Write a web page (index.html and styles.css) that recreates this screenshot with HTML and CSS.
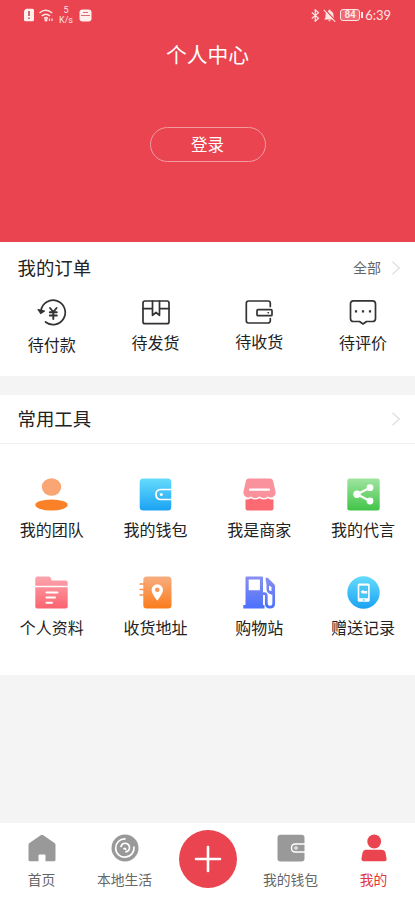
FILE: index.html
```html
<!DOCTYPE html>
<html lang="zh-CN">
<head>
<meta charset="utf-8">
<meta name="viewport" content="width=device-width">
<title>个人中心</title>
<link rel="stylesheet" href="styles.css">
</head>
<body>
<svg class="defs" width="0" height="0">
  <defs>
    <linearGradient id="orange" x1="0" y1="0" x2="0" y2="1"><stop offset="0" stop-color="#f8ae80"/><stop offset="1" stop-color="#fa7b1c"/></linearGradient>
    <linearGradient id="blue" x1="0" y1="0" x2="0" y2="1"><stop offset="0" stop-color="#65dbfc"/><stop offset="1" stop-color="#1ba2f3"/></linearGradient>
    <linearGradient id="pink" x1="0" y1="0" x2="0" y2="1"><stop offset="0" stop-color="#fba5ae"/><stop offset="1" stop-color="#fb636e"/></linearGradient>
    <linearGradient id="green" x1="0" y1="0" x2="0" y2="1"><stop offset="0" stop-color="#9fe5a0"/><stop offset="1" stop-color="#41c447"/></linearGradient>
    <linearGradient id="indigo" x1="0" y1="0" x2="0" y2="33" gradientUnits="userSpaceOnUse"><stop offset="0" stop-color="#8990ee"/><stop offset="1" stop-color="#4a70fd"/></linearGradient>
  </defs>
</svg>
<div class="app">
  <header class="hero">
    <div class="status">
      <div class="status-left">
        <svg width="12" height="14" viewBox="0 0 12 14"><path d="M3 .7h6.500a1.500 1.500 0 0 1 1.500 1.500v9.600a1.500 1.500 0 0 1-1.500 1.500h-7A1.500 1.500 0 0 1 1 11.800V2.700z" fill="#fff0ee"/><path d="M6 3v5M6 9.500v1.500" stroke="#b9424b" stroke-width="1.500"/></svg>
        <svg class="wifi" width="15" height="13" viewBox="0 0 15 13" fill="none" stroke="#ffe5e3" stroke-width="1.500"><path d="M.5 4q6.200-5.400 12.800 0M2.700 7q4.200-3.500 8.400 0M5 9.500q2-1.700 4 0"/><circle cx="7" cy="11" r=".8"/><path d="M10.500 9.500v2.500M13 9.500v2.500" stroke-width="1.200"/></svg>
        <div class="speed"><span>5</span><span>K/s</span></div>
        <svg width="13" height="13" viewBox="0 0 13 13"><rect x=".5" y=".5" width="12" height="12" rx="3" fill="#fff0ee"/><path d="M2 6.500h9M4 3.500h5" stroke="#df6c71" stroke-width="1.200"/></svg>
      </div>
      <div class="status-right">
        <svg width="9" height="13" viewBox="0 0 9 13" fill="none" stroke="#ffe5e3" stroke-width="1.200"><path d="M.8 3.500l6.700 5.700-3.300 3V.8l3.300 3L.8 9.500"/></svg>
        <svg class="bell" width="13" height="13" viewBox="0 0 13 13"><path d="M1 10.500c1.300-1 1.500-2 1.500-4.300 0-2.400 1-3.700 3-4.200V.8h2V2c2 .5 3 2 3 4.200s.2 3.300 1.500 4.300zM5 11.200h3l-1.500 1.300z" fill="#ffe5e3"/><path d="M2 .5l11 12" stroke="#e9444f" stroke-width="1.500"/><path d="M.8 .8l11.500 12" stroke="#ffe5e3" stroke-width="1.100"/></svg>
        <div class="battery">84</div>
        <span class="clock">6:39</span>
      </div>
    </div>
    <h1>个人中心</h1>
    <button class="login">登录</button>
  </header>

  <section class="orders">
    <div class="bar"><h2>我的订单</h2><span class="all">全部</span>
      <svg class="chev" width="10" height="14" viewBox="0 0 10 14"><path d="M1.500.8l6.800 6.200-6.800 6.200"/></svg></div>
    <div class="grid">
      <a class="item pay"><svg width="30" height="30" viewBox="0 0 30 30" class="line"><path d="M4 12.500A12.200 12.200 0 1 1 8.500 24"/><path d="M1 11.500l2.700 4L7.500 13z" fill="#333" stroke-width="1.200"/><path d="M13 10l3.300 4 3.300-4M16.300 14v7M12.800 14.300h7M12.800 17.500h7" stroke-width="1.900"/></svg><span>待付款</span></a>
      <a class="item ship"><svg width="30" height="30" viewBox="0 0 30 30" class="line"><rect x="2" y="3" width="26" height="22.700" rx="2"/><path d="M2 10.700h9M19 10.700h9M11.500 3v14.300l3.500-2.800 3.500 2.800V3"/></svg><span>待发货</span></a>
      <a class="item recv"><svg width="30" height="30" viewBox="0 0 30 30" class="line"><path d="M26.300 8.500V5.200a2.200 2.200 0 0 0-2.200-2.200H4.500A2.200 2.200 0 0 0 2.300 5.200v17.600A2.200 2.200 0 0 0 4.500 25h19.600a2.200 2.200 0 0 0 2.200-2.200V20.500"/><rect x="13" y="11.700" width="15" height="6" rx="1"/><path d="M24 14.700h.5" stroke-width="1.400"/></svg><span>待收货</span></a>
      <a class="item rate"><svg width="30" height="30" viewBox="0 0 30 30" class="line"><path d="M5.500 2.800h19a3 3 0 0 1 3 3v15a3 3 0 0 1-3 2.700h-6L15 26l-3.500-2.500h-6a3 3 0 0 1-3-2.700v-15a3 3 0 0 1 3-3z"/><path d="M6.900 13.300h2.200M13.900 13.300h2.200M20.900 13.300h2.200" stroke-width="2.300" stroke-linecap="butt"/></svg><span>待评价</span></a>
    </div>
  </section>

  <section class="tools">
    <div class="bar"><h2>常用工具</h2>
      <svg class="chev" width="10" height="14" viewBox="0 0 10 14"><path d="M1.500.8l6.800 6.200-6.800 6.200"/></svg></div>
    <div class="grid">
      <a class="item"><svg width="33" height="33" viewBox="0 0 33 33"><ellipse cx="16.500" cy="9" rx="9.700" ry="8.800" fill="#f9a574"/><ellipse cx="16.500" cy="27" rx="16.200" ry="5.500" fill="#fa8127"/></svg><span>我的团队</span></a>
      <a class="item"><svg width="33" height="33" viewBox="0 0 33 33"><rect x=".7" y=".5" width="31.600" height="32" rx="3.500" fill="url(#blue)"/><path d="M33 11.500H22q-5 0-5 5t5 5h11" fill="none" stroke="#fff" stroke-width="1.700"/><circle cx="22.300" cy="16.500" r="1.500" fill="#fff"/></svg><span>我的钱包</span></a>
      <a class="item"><svg width="33" height="33" viewBox="0 0 33 33"><path d="M6 .5h21q2.500 0 3 2l2.500 11q.7 3-1.500 4.700-3 2.500-6 .3-3.700 3.300-8.500 0-4.800 3.300-8.500 0-3 2.200-6-.3-2.200-1.700-1.500-4.700L3 2.500q.5-2 3-2z" fill="#fa929d"/><path d="M2.500 21.500q3 .5 5.500-1.300 4 2.700 8.500 0 4.500 2.700 8.500 0 2.500 1.800 5.500 1.300v9q0 2-2 2h-24q-2 0-2-2z" fill="#fb6973"/><path d="M7 11.700h19" stroke="#fff" stroke-width="2.200" stroke-linecap="round"/></svg><span>我是商家</span></a>
      <a class="item"><svg width="33" height="33" viewBox="0 0 33 33"><rect x=".3" y=".5" width="32.400" height="32" rx="2.500" fill="url(#green)"/><path d="M23 9.700L10 16.300l13 6.700" fill="none" stroke="#fff" stroke-width="2.200"/><g fill="#fff"><circle cx="23" cy="9.700" r="3.400"/><circle cx="10" cy="16.300" r="3.700"/><circle cx="23" cy="23" r="3.400"/></g></svg><span>我的代言</span></a>
      <a class="item"><svg width="33" height="33" viewBox="0 0 33 33"><path d="M.3 2.500q0-2 2-2h11.500q1.700 0 2 1.500l.7 2.500h14.200q2 0 2 2v24q0 2-2 2H2.300q-2 0-2-2z" fill="url(#pink)"/><path d="M0 10.500h33" stroke="#fff" stroke-width="1.700"/><path d="M11.500 16.500h11M11.500 21.500h8.500M11.500 26.700h5.500" stroke="#fff" stroke-width="2" stroke-linecap="round"/></svg><span>个人资料</span></a>
      <a class="item"><svg width="33" height="33" viewBox="0 0 33 33"><rect x="4.300" y=".5" width="28.200" height="32" rx="3.500" fill="url(#orange)"/><path d="M1.200 8h4.300M1.200 13.500h4.300M1.200 19h4.300" stroke="#f8944e" stroke-width="1.700" stroke-linecap="round"/><path fill-rule="evenodd" d="M18.300 8.300a5.700 5.700 0 0 1 5.700 5.700c0 4-5.700 10.500-5.700 10.500S12.600 18 12.600 14a5.700 5.700 0 0 1 5.700-5.700zm0 3.200a2.300 2.300 0 1 0 0 4.600 2.300 2.300 0 0 0 0-4.600z" fill="#fff"/></svg><span>收货地址</span></a>
      <a class="item"><svg width="33" height="33" viewBox="0 0 33 33"><path fill-rule="evenodd" d="M2.500 1.500q0-1 1-1h15.500q1 0 1 1v27.500h1.500v3.500H.3V29h2.200zm3.200 2v10.700h11.200V3.500z" fill="url(#indigo)"/><path d="M20 17.700h1.500q1.800 0 1.800 2.300v7.500q0 3.700 3.700 3.700t3.700-3.700V10.500L24 3.700" fill="none" stroke="url(#indigo)" stroke-width="2.700" stroke-linejoin="round"/><path d="M22.500 2.500q1-1.500 2.500-.5l6.500 6.500v10H28q-4.500-1.500-4.500-5.500V8.500z" fill="url(#indigo)"/><path d="M26 9.500v4q0 1.500 2.500 1.500v-4z" fill="#fff"/></svg><span>购物站</span></a>
      <a class="item"><svg width="33" height="33" viewBox="0 0 33 33"><circle cx="16.500" cy="16.500" r="16.200" fill="url(#blue)"/><rect x="10.700" y="7.500" width="12" height="18.300" rx="1.500" fill="#fff"/><rect x="12.300" y="9.700" width="8.800" height="12.500" fill="#48c5f7"/><path d="M13.500 15.700l3-2v1.200h3.700v2.600h-5z" fill="#fff"/><path d="M15.500 24h2.500" stroke="#48c5f7"/></svg><span>赠送记录</span></a>
    </div>
  </section>

  <nav class="tabs">
    <a class="tab"><svg width="28" height="28" viewBox="0 0 28 28"><path d="M12.700 1.300q1.300-1 2.600 0L26.500 9q1 .7 1 2v14.800q0 1.500-1.500 1.500h-8.500V21.500q0-1-1-1h-5q-1 0-1 1v5.800H2q-1.500 0-1.500-1.500V11q0-1.300 1-2z" fill="#999"/></svg><span>首页</span></a>
    <a class="tab"><svg width="28" height="28" viewBox="0 0 28 28"><circle cx="14" cy="14" r="13.500" fill="#999"/><path d="M14 4.800A9.200 9.200 0 1 0 23 13M10 12.500a4.300 4.300 0 1 1 5 5.300M13 14.700q1.500-1 1.700.8" fill="none" stroke="#fff" stroke-width="1.700" stroke-linecap="round"/></svg><span>本地生活</span></a>
    <a class="tab add"><svg width="58" height="58" viewBox="0 0 58 58"><circle cx="29" cy="29" r="29" fill="#e9444f"/><path d="M29 17v24M17 29h24" stroke="#fff" stroke-width="2.600" stroke-linecap="round"/></svg></a>
    <a class="tab"><svg width="28" height="28" viewBox="0 0 28 28"><rect x=".5" y=".7" width="27" height="26.800" rx="3" fill="#999"/><path d="M28 10H18.500q-4 0-4 4t4 4H28" fill="none" stroke="#fff" stroke-width="1.400"/><circle cx="19" cy="14" r="1.300" fill="none" stroke="#fff" stroke-width="1"/></svg><span>我的钱包</span></a>
    <a class="tab active"><svg width="28" height="28" viewBox="0 0 28 28"><circle cx="14.200" cy="7.500" r="6.900" fill="#e9444f"/><path d="M6 15.700h15.500q3 0 4 3.300l1 5.500q.5 2.800-2 2.800H4q-3 0-2.500-2.800L2.500 19q1-3.300 3.500-3.300z" fill="#e9444f"/></svg><span>我的</span></a>
  </nav>
</div>
</body>
</html>
```
FILE: styles.css
```css
* { box-sizing: border-box; }
body { margin: 0; background: #f4f4f4; font-family: "Noto Sans CJK SC", "Noto Sans", sans-serif; color: #222; }
svg { display: block; flex: none; }
.defs { position: absolute; }
.app { display: flex; flex-direction: column; height: 900px; }
.hero { height: 242px; background: #e9444f; color: #fff; display: flex; flex-direction: column; align-items: center; }
.status { width: 100%; height: 30px; padding: 0 24px 0 23px; display: flex; justify-content: space-between; align-items: center; color: #ffe5e3; }
.status-left, .status-right { display: flex; align-items: center; }
.wifi { margin-left: 4px; }
.speed { display: flex; flex-direction: column; align-items: center; width: 16px; margin: 0 5px 0 4px; font: 9px/10px Roboto, sans-serif; }
.bell { margin: 0 4px 0 3px; }
.battery { position: relative; width: 20px; height: 12px; border: 1px solid #ffe5e3; border-radius: 3px; background: #ed6c75; font: 700 10px/10px Roboto, sans-serif; text-align: center; }
.battery::after { content: ""; position: absolute; left: 20px; top: 2px; width: 1.5px; height: 6px; background: #ffe5e3; }
.clock { margin-left: 5px; font: 13px/16px Lato, sans-serif; }
h1 { margin: 8px 0 0; font-size: 20.8px; line-height: 32px; font-weight: 400; }
.login { margin-top: 57px; width: 116px; height: 35px; padding: 0 0 1px; border: 1px solid #f49ba1; border-radius: 18px; background: none; color: #fff; font: inherit; font-size: 16.5px; line-height: 31px; }
.orders, .tools { background: #fff; }
.orders { height: 134px; }
.tools { height: 280px; margin-top: 19px; }
.bar { display: flex; align-items: center; padding: 0 14px 0 17.5px; }
.orders .bar { height: 52px; }
.tools .bar { height: 49px; border-bottom: 1px solid #f1f1f1; }
h2 { margin: -2px auto 0 0; font-size: 18.4px; line-height: 28px; font-weight: 400; }
.all { margin: -2px 10px 0 0; font-size: 14px; line-height: 20px; color: #666; }
.chev path { fill: none; stroke: #dedede; stroke-width: 1.2; }
.grid { display: grid; grid-template-columns: repeat(4, 1fr); }
.item { display: flex; flex-direction: column; align-items: center; font-size: 16px; line-height: 24px; }
.orders .grid { padding-top: 4px; }
.line { fill: none; stroke: #333; stroke-width: 1.7; stroke-linejoin: round; stroke-linecap: round; }
.pay span { margin-top: 4px; }
.ship span { margin-top: 2px; }
.recv span { margin-top: 1px; }
.rate span { margin-top: 2px; }
.tools .grid { padding-top: 34px; grid-auto-rows: 98px; }
.tools .item span { margin-top: 6px; }
.tabs { display: grid; grid-template-columns: repeat(5, 1fr); height: 77px; margin-top: auto; background: #fff; }
.tab { display: flex; flex-direction: column; align-items: center; padding-top: 11px; font-size: 13.8px; line-height: 20px; color: #666; }
.tab span { margin-top: 7px; }
.add { padding-top: 7px; }
.active { color: #e3353f; }
```
